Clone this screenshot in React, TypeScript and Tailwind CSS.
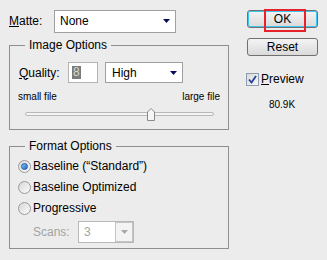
import React from 'react';

// small navy arrow used by the drop-down boxes
const Arrow = ({ color = '#0b0b5c' }: { color?: string }) => (
  <svg width="7" height="4" viewBox="0 0 7 4"><path d="M0 0h7L3.5 4z" fill={color} /></svg>
);

const Radio = ({ checked, label }: { checked?: boolean; label: string }) => (
  <div className="flex h-[13px] items-center gap-[2px]">
    <div className="flex h-[13px] w-[13px] items-center justify-center rounded-full border border-[#9a9a9a] bg-gradient-to-br from-[#d8d8d8] to-[#fbfbfb]">
      {checked && <div className="h-[7px] w-[7px] rounded-full border border-[#1c5aa8] bg-gradient-to-br from-[#7fc4f5] to-[#1e6cc0]" />}
    </div>
    <span className="leading-[13px]">{label}</span>
  </div>
);

export default function App() {
  return (
    <main className="flex h-[260px] w-[327px] bg-[#ececec] pl-[9px] pt-[10px] text-[12px] text-black" style={{ fontFamily: '"Liberation Sans", Arial, sans-serif' }}>
      {/* left column */}
      <div className="w-[220px]">
        <div className="flex h-[22px] items-center">
          <span className="w-[45px]"><span className="underline">M</span>atte:</span>
          <div className="flex h-[23px] w-[122px] items-center justify-between border border-[#a0a0a0] bg-white pl-[5px] pr-[5px]">
            <span>None</span>
            <Arrow />
          </div>
        </div>

        <fieldset className="mt-[8px] border border-[#8f8f8f] pb-[8px] pt-[12px]">
          <legend className="ml-[15px] px-[4px] leading-[10px]">Image Options</legend>
          <div className="flex h-[21px] items-center pl-[9px]">
            <span className="w-[49px]"><span className="underline">Q</span>uality:</span>
            <div className="flex h-[21px] w-[30px] items-center border border-[#b4b4b4] bg-white pl-[3px]">
              <span className="bg-[#7b7b7b] px-[1px] leading-[13px] text-[#d8d8d8]">8</span>
            </div>
            <div className="ml-[7px] flex h-[21px] w-[78px] items-center justify-between border border-[#a0a0a0] bg-white pl-[6px] pr-[5px]">
              <span>High</span>
              <Arrow />
            </div>
          </div>
          <div className="mt-[8px] flex justify-between pl-[8px] pr-[8px] text-[10px] leading-[12px]">
            <span>small file</span>
            <span>large file</span>
          </div>
          <div className="relative ml-[15px] mt-[5px] h-[13px] w-[189px]">
            <div className="absolute left-0 right-0 top-[4px] h-[4px] rounded-full border border-[#b8b8b8] bg-[#f4f4f4]" />
            <svg className="absolute left-[122px] top-0" width="8" height="13" viewBox="0 0 8 13">
              <path d="M0.5 12.5V4L4 0.5L7.5 4V12.5Z" fill="#f6f6f6" stroke="#8a8a8a" />
            </svg>
          </div>
        </fieldset>

        <fieldset className="mt-[11px] border border-[#8f8f8f] pb-[5px] pl-[8px] pt-[9px]">
          <legend className="ml-[7px] px-[4px] leading-[10px]">Format Options</legend>
          <div className="flex flex-col gap-[8px]">
            <Radio checked label={'Baseline (\u201CStandard\u201D)'} />
            <Radio label="Baseline Optimized" />
            <Radio label="Progressive" />
          </div>
          <div className="mt-[6px] flex h-[22px] items-center pl-[15px]">
            <span className="w-[45px] text-[#a3a3a3]">Scans:</span>
            <div className="flex h-[22px] w-[56px] items-center border border-[#b9b9b9] bg-white">
              <span className="flex-1 pl-[5px] text-[#a3a3a3]">3</span>
              <div className="flex h-[20px] w-[18px] items-center justify-center border border-[#c4c4c4] bg-[#f4f4f4]">
                <Arrow color="#a8a8a8" />
              </div>
            </div>
          </div>
        </fieldset>
      </div>

      {/* right column */}
      <div className="ml-[17px] w-[72px]">
        <div className="relative ml-[1px]">
          <button className="flex h-[18px] w-[71px] items-center justify-center rounded-[3px] border border-[#707070] bg-gradient-to-b from-[#f4f4f4] to-[#dadada] shadow-[inset_0_0_0_1px_#3cc6f0] leading-[16px]">OK</button>
          <div className="absolute left-[17px] top-[-1px] h-[23px] w-[42px] border-2 border-[#e8222a]" />
        </div>
        <button className="ml-[1px] mt-[10px] flex h-[18px] w-[71px] items-center justify-center rounded-[3px] border border-[#707070] bg-gradient-to-b from-[#f4f4f4] to-[#dadada] leading-[16px]">Reset</button>
        <div className="mt-[17px] flex h-[13px] items-center gap-[2px]">
          <div className="flex h-[13px] w-[13px] items-center justify-center border border-[#8e9db2] bg-gradient-to-br from-[#d9d9d9] to-[#f8f8f8]">
            <svg width="9" height="9" viewBox="0 0 9 9"><path d="M1 4.5L3.5 7.5L8 1" fill="none" stroke="#2a3f9c" strokeWidth="1.8" /></svg>
          </div>
          <span className="leading-[13px]"><span className="underline">P</span>review</span>
        </div>
        <div className="mt-[13px] text-center text-[10px] leading-[12px]">80.9K</div>
      </div>
    </main>
  );
}
